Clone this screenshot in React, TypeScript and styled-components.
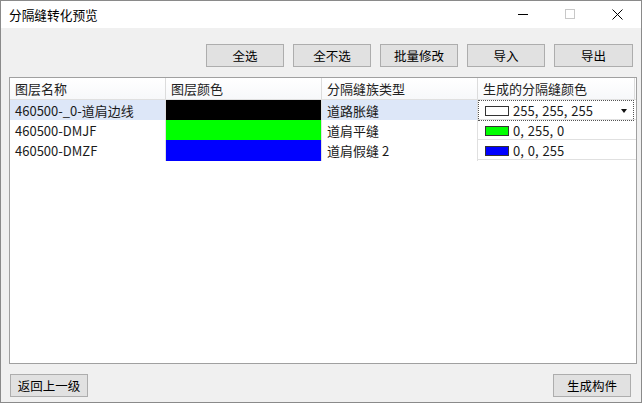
import React from "react";
import styled, { createGlobalStyle } from "styled-components";

const Global = createGlobalStyle`
  html, body { margin: 0; padding: 0; background: #f0f0f0; }
  * { box-sizing: border-box; }
  body { font-family: "Noto Sans CJK SC", "Noto Sans", sans-serif; font-size: 13px; color: #000; }
`;

const Window = styled.div`
  width: 642px;
  height: 403px;
  border: 1px solid #8a8a8a;
  background: #f0f0f0;
  display: flex;
  flex-direction: column;
  overflow: hidden;
`;

const TitleBar = styled.div`
  height: 27px;
  background: #fff;
  display: flex;
  align-items: center;
  padding-left: 8px;
  flex-shrink: 0;
`;

const Title = styled.div`
  flex: 1;
  font-size: 12.7px;
  color: #000;
`;

const WinBtn = styled.div`
  width: 47px;
  height: 27px;
  display: flex;
  align-items: center;
  justify-content: center;
`;

const Toolbar = styled.div`
  display: flex;
  justify-content: flex-end;
  gap: 9px;
  padding: 16px 8px 0 0;
`;

const Button = styled.button<{ $w?: number }>`
  width: ${(p) => p.$w ?? 78}px;
  height: 23px;
  background: #e1e1e1;
  border: 1px solid #adadad;
  font-family: "Noto Sans CJK SC", sans-serif;
  font-size: 12.5px;
  color: #000;
  padding: 0;
  line-height: 20px;
`;

const Table = styled.div`
  margin: 10px 4px 0 8px;
  height: 287px;
  background: #fff;
  border: 1px solid #a0a0a0;
  display: flex;
  flex-direction: column;
`;

const Row = styled.div<{ $head?: boolean }>`
  display: grid;
  grid-template-columns: 156px 156px 156px 157px;
  height: ${(p) => (p.$head ? 22 : 20)}px;
  border-bottom: 1px solid #e0e0e0;
  ${(p) => (p.$head ? "background: linear-gradient(#ffffff, #f7f8fa);" : "")}
`;

const HeadCell = styled.div`
  border-right: 1px solid #dcdcdc;
  padding-left: 5px;
  display: flex;
  align-items: center;
  color: #222;
  white-space: nowrap;
`;

const Cell = styled.div<{ $sel?: boolean; $fill?: string }>`
  border-right: 1px solid #e0e0e0;
  padding-left: 5px;
  display: flex;
  align-items: center;
  white-space: nowrap;
  color: #1a1a1a;
  background: ${(p) => p.$fill ?? (p.$sel ? "#dde7f8" : "#fff")};
`;

const ComboCell = styled.div<{ $focus?: boolean }>`
  display: flex;
  align-items: center;
  padding-left: 6px;
  padding-right: 6px;
  white-space: nowrap;
  color: #1a1a1a;
  border: 1px ${(p) => (p.$focus ? "dotted #555" : "solid transparent")};
  margin: 0 1px 0 0;
`;

const Swatch = styled.span<{ $c: string }>`
  width: 24px;
  height: 10px;
  border: 1px solid #333;
  background: ${(p) => p.$c};
  margin-right: 4px;
  flex-shrink: 0;
`;

const ComboText = styled.span`
  flex: 1;
  word-spacing: 1px;
`;

const Arrow = styled.span`
  width: 0;
  height: 0;
  border-left: 3.5px solid transparent;
  border-right: 3.5px solid transparent;
  border-top: 4px solid #111;
`;

const Footer = styled.div`
  display: flex;
  justify-content: space-between;
  padding: 10px 10px 0 9px;
`;

const rows = [
  { name: "460500-_0-道肩边线", color: "#000000", type: "道路胀缝", rgb: "255, 255, 255", sw: "#ffffff", sel: true },
  { name: "460500-DMJF", color: "#00ff00", type: "道肩平缝", rgb: "0, 255, 0", sw: "#00ff00", sel: false },
  { name: "460500-DMZF", color: "#0000ff", type: "道肩假缝 2", rgb: "0, 0, 255", sw: "#0000ff", sel: false },
];

export default function App() {
  return (
    <>
      <Global />
      <Window>
        <TitleBar>
          <Title>分隔缝转化预览</Title>
          <WinBtn>
            <svg width="11" height="11" viewBox="0 0 11 11"><line x1="0" y1="5.5" x2="10" y2="5.5" stroke="#000" strokeWidth="1" /></svg>
          </WinBtn>
          <WinBtn>
            <svg width="11" height="11" viewBox="0 0 11 11"><rect x="0.5" y="0.5" width="9" height="9" fill="none" stroke="#c8c8c8" strokeWidth="1" /></svg>
          </WinBtn>
          <WinBtn>
            <svg width="11" height="11" viewBox="0 0 11 11"><path d="M0.5 0.5 L10.5 10.5 M10.5 0.5 L0.5 10.5" stroke="#000" strokeWidth="1" /></svg>
          </WinBtn>
        </TitleBar>
        <Toolbar>
          <Button>全选</Button>
          <Button>全不选</Button>
          <Button>批量修改</Button>
          <Button>导入</Button>
          <Button $w={79}>导出</Button>
        </Toolbar>
        <Table>
          <Row $head>
            <HeadCell>图层名称</HeadCell>
            <HeadCell>图层颜色</HeadCell>
            <HeadCell>分隔缝族类型</HeadCell>
            <HeadCell>生成的分隔缝颜色</HeadCell>
          </Row>
          {rows.map((r) => (
            <Row key={r.name}>
              <Cell $sel={r.sel}>{r.name}</Cell>
              <Cell $fill={r.color} />
              <Cell $sel={r.sel}>{r.type}</Cell>
              <ComboCell $focus={r.sel}>
                <Swatch $c={r.sw} />
                <ComboText>{r.rgb}</ComboText>
                {r.sel && <Arrow />}
              </ComboCell>
            </Row>
          ))}
        </Table>
        <Footer>
          <Button>返回上一级</Button>
          <Button>生成构件</Button>
        </Footer>
      </Window>
    </>
  );
}
